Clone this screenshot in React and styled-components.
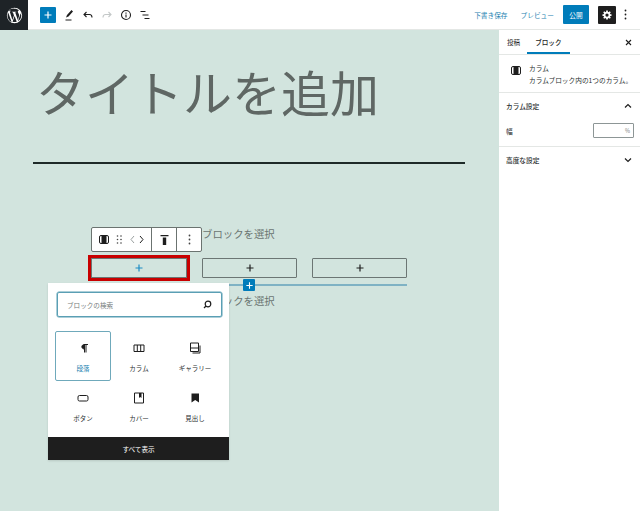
import React from 'react';
import styled, { createGlobalStyle } from 'styled-components';

const GlobalStyle = createGlobalStyle`
  html, body { margin: 0; padding: 0; background: #fff; }
  body {
    font-family: "Noto Sans CJK JP", "Noto Sans", sans-serif;
    color: #1e1e1e;
    overflow: hidden;
  }
`;

const Page = styled.div`
  width: 640px;
  height: 511px;
  display: flex;
  flex-direction: column;
  overflow: hidden;
`;

const TopBar = styled.header`
  height: 29px;
  flex: none;
  display: flex;
  align-items: center;
  background: #fff;
  border-bottom: 1px solid #e4e7e5;
`;

const Logo = styled.div`
  width: 28px;
  height: 30px;
  margin-bottom: -1px;
  background: #1e2327;
  display: flex;
  align-items: center;
  justify-content: center;
`;

const Tools = styled.div`
  display: flex;
  align-items: center;
  gap: 7px;
  margin-left: 12px;
`;

const AddButton = styled.div`
  width: 16px;
  height: 16px;
  background: #007cba;
  border-radius: 1px;
  display: flex;
  align-items: center;
  justify-content: center;
`;

const ToolIcon = styled.svg`
  width: 12px;
  height: 12px;
  display: block;
  color: ${p => (p.$muted ? '#c4c8c8' : '#1e1e1e')};
`;

const Actions = styled.div`
  margin-left: auto;
  display: flex;
  align-items: center;
`;

const LinkButton = styled.span`
  font-size: 6.7px;
  color: #1b7fb0;
  margin-right: ${p => p.$gap}px;
`;

const Publish = styled.div`
  width: 26px;
  height: 19px;
  background: #007cba;
  color: #fff;
  font-size: 6.7px;
  border-radius: 1px;
  display: flex;
  align-items: center;
  justify-content: center;
  margin-right: 9px;
`;

const SettingsButton = styled.div`
  width: 18px;
  height: 18px;
  background: #1e1e1e;
  border-radius: 1px;
  display: flex;
  align-items: center;
  justify-content: center;
  margin-right: 3px;
`;

const MoreDots = styled.div`
  width: 12px;
  display: flex;
  justify-content: center;
  margin-right: 9px;
`;

const Body = styled.div`
  flex: 1;
  display: flex;
  min-height: 0;
`;

const Canvas = styled.main`
  position: relative;
  width: 499px;
  flex: none;
  background: #d2e4de;
  padding: 0 34px 0 33px;
  box-sizing: border-box;
`;

const Title = styled.h1`
  margin: 0;
  padding: 27px 0 0 3px;
  height: 132px;
  box-sizing: border-box;
  font-size: 49px;
  line-height: 68px;
  font-weight: 400;
  color: #5f6764;
  white-space: nowrap;
`;

const Rule = styled.hr`
  margin: 0;
  border: 0;
  height: 2px;
  background: #1e2a28;
`;

const ColumnsArea = styled.section`
  margin: 29px 0 0 58px;
  width: 316px;
  padding-top: 28px;
`;

const Hint = styled.div`
  height: 37px;
  margin-left: 111px;
  font-size: 10.4px;
  line-height: 26px;
  color: #6b7572;
  white-space: nowrap;
`;

const Columns = styled.div`
  display: grid;
  grid-template-columns: 96px 95px 95px;
  column-gap: 15px;
`;

const AppenderButton = styled.div`
  height: 20px;
  box-sizing: border-box;
  border: 1px solid #6c7674;
  border-radius: ${p => (p.$selected ? 0 : 1)}px;
  display: flex;
  align-items: center;
  justify-content: center;
  outline: ${p => (p.$selected ? '3px solid #c80000' : 'none')};
`;

const Separator = styled.div`
  position: relative;
  height: 2px;
  margin-top: 6px;
  background: #7fb2c4;
`;

const SeparatorPlus = styled(AddButton)`
  position: absolute;
  left: 152px;
  top: -5px;
  width: 12px;
  height: 12px;
`;

const SecondHint = styled(Hint)`
  margin-top: 2px;
`;

const BlockToolbar = styled.div`
  position: absolute;
  left: 91px;
  top: 197px;
  height: 25px;
  width: 111px;
  box-sizing: border-box;
  display: flex;
  background: #fff;
  border: 1px solid #6b7370;
  border-radius: 2px;
`;

const ToolbarGroup = styled.div`
  display: flex;
  align-items: center;
  justify-content: center;
  gap: ${p => p.$gap || 0}px;
  width: ${p => p.$w}px;
  flex: none;
  box-sizing: border-box;
  & + & {
    border-left: 1px solid #6b7370;
  }
`;

const Inserter = styled.div`
  position: absolute;
  left: 48px;
  top: 253px;
  width: 181px;
  height: 177px;
  display: flex;
  flex-direction: column;
  background: #fff;
  box-shadow: 0 1px 2px rgba(0, 0, 0, 0.12);
`;

const SearchBox = styled.div`
  height: 25px;
  margin: 9px 7px 0 9px;
  box-sizing: border-box;
  border: 1px solid #5a9fb4;
  box-shadow: 0 0 0 0.5px #5a9fb4;
  border-radius: 2px;
  display: flex;
  align-items: center;
  justify-content: space-between;
  padding: 0 9px;
  font-size: 6.6px;
  color: #757b7b;
`;

const BlockGrid = styled.div`
  display: grid;
  grid-template-columns: repeat(3, 56px);
  grid-template-rows: 50px 49px;
  margin: 14px 0 0 7px;
  flex: 1;
`;

const BlockItem = styled.div`
  display: flex;
  flex-direction: column;
  align-items: center;
  padding-top: 9px;
  box-sizing: border-box;
  gap: 8px;
  font-size: 6.5px;
  color: ${p => (p.$active ? '#1b7fb0' : '#2a2f30')};
  border: 1px solid ${p => (p.$active ? '#6fa9bb' : 'transparent')};
  border-radius: 2px;
`;

const BlockIcon = styled.svg`
  width: 14px;
  height: 14px;
  display: block;
`;

const ShowAll = styled.div`
  height: 23px;
  background: #1e1e1e;
  color: #fff;
  font-size: 6.6px;
  display: flex;
  align-items: center;
  justify-content: center;
`;

const Sidebar = styled.aside`
  width: 141px;
  flex: none;
  background: #fff;
  display: flex;
  flex-direction: column;
`;

const TabBar = styled.div`
  height: 24px;
  display: flex;
  align-items: stretch;
  padding: 0 7px 0 8px;
  border-bottom: 1px solid #e4e7e5;
`;

const Tab = styled.div`
  font-size: 6.6px;
  font-weight: ${p => (p.$active ? 500 : 400)};
  display: flex;
  align-items: center;
  padding: 0 ${p => (p.$active ? 8 : 0)}px;
  margin-left: ${p => (p.$active ? 7 : 0)}px;
  box-shadow: ${p => (p.$active ? 'inset 0 -2px 0 #007cba' : 'none')};
`;

const CloseX = styled.div`
  margin-left: auto;
  margin-right: 1.5px;
  display: flex;
  align-items: center;
`;

const BlockCard = styled.div`
  display: flex;
  gap: 8px;
  box-sizing: border-box;
  padding: 8px 6px 0 12px;
  height: 38px;
  border-bottom: 1px solid #e4e7e5;
`;

const CardIcon = styled.div`
  display: flex;
  padding-top: 3px;
  height: 9px;
`;

const CardText = styled.div`
  font-size: 6.7px;
  line-height: 11.5px;
  white-space: nowrap;
  color: #2a2f30;
  p { margin: 0; }
`;

const Panel = styled.div`
  padding: 0 7px;
  & + & {
    border-top: 1px solid #e4e7e5;
  }
`;

const PanelHead = styled.div`
  height: 26px;
  display: flex;
  align-items: center;
  justify-content: space-between;
  font-size: 6.7px;
  font-weight: 500;
  color: #2a2f30;
`;

const WidthRow = styled.div`
  display: flex;
  align-items: center;
  justify-content: space-between;
  height: 19px;
  margin-right: -1px;
  padding: 2px 0 6px;
  font-size: 6.7px;
  color: #2a2f30;
`;

const WidthInput = styled.div`
  width: 41px;
  height: 15px;
  box-sizing: border-box;
  border: 1px solid #8d9696;
  border-radius: 1px;
  font-size: 5.5px;
  color: #7a8080;
  display: flex;
  align-items: center;
  justify-content: flex-end;
  padding-right: 3px;
`;

const Plus = ({ color = '#fff', size = 10 }) => (
  <svg width={size} height={size} viewBox="0 0 10 10" fill="none" stroke={color} strokeWidth="1.2">
    <path d="M5 1.5v7M1.5 5h7" />
  </svg>
);

const Dots = ({ color = '#1e1e1e' }) => (
  <svg width="3" height="11" viewBox="0 0 3 11" fill={color}>
    <circle cx="1.5" cy="1.5" r="0.9" />
    <circle cx="1.5" cy="5.5" r="0.9" />
    <circle cx="1.5" cy="9.5" r="0.9" />
  </svg>
);

const ColumnGlyph = () => (
  <svg width="10" height="9" viewBox="0 0 10 9">
    <rect x="0.5" y="0.5" width="9" height="8" rx="1.5" fill="none" stroke="#1e1e1e" />
    <rect x="2.500" y="0.5" width="5" height="8" fill="#1e1e1e" />
  </svg>
);

const Chevron = ({ up }) => (
  <svg width="10" height="10" viewBox="0 0 10 10" fill="none" stroke="#1e1e1e" strokeWidth="1.2">
    <path d={up ? 'M2 6.5 5 3.5l3 3' : 'M2 3.5 5 6.5l3-3'} />
  </svg>
);

const WpLogo = () => (
  <svg width="17" height="17" viewBox="0 0 20 20" fill="#fff">
    <path d="M10 1a9 9 0 1 0 0 18 9 9 0 0 0 0-18Zm0 1c2.1 0 4 .8 5.400 2.100h-.100c-.800 0-1.400.7-1.400 1.500 0 .7.400 1.200.800 1.900.300.600.700 1.300.700 2.400 0 .700-.300 1.600-.700 2.700l-.800 2.800-3.100-9.100c.500 0 1-.100 1-.100.500 0 .400-.700 0-.700 0 0-1.400.100-2.300.100-.800 0-2.200-.100-2.200-.100-.500 0-.500.700-.100.700 0 0 .400.100.900.100l1.300 3.600-1.900 5.500L4.400 5.200c.500 0 1-.100 1-.100.500 0 .400-.700 0-.700 0 0-1.300.100-2.100.100h-.300A8 8 0 0 1 10 2ZM2.700 6.900l3.900 10.800A8 8 0 0 1 2.700 6.900Zm7.400 3.700 2.400 6.600.100.100a8 8 0 0 1-4.900.100l2.400-6.800Zm6.300-4.200A8 8 0 0 1 18 10c0 2.900-1.600 5.500-4 6.900l2.400-7c.500-1.100.600-2 .600-2.800l-.100-.700Z" />
  </svg>
);

const Gear = () => (
  <svg width="12" height="12" viewBox="0 0 24 24" fill="none" stroke="#fff" strokeWidth="3.500">
    <circle cx="12" cy="12" r="5" />
    <path d="M12 3v4M12 17v4M3 12h4M17 12h4M5.500 5.500l3 3M15.500 15.500l3 3M5.500 18.500l3-3M15.500 8.500l3-3" />
  </svg>
);

const blocks = [
  {
    label: '段落',
    active: true,
    icon: <path d="M8 3.500h4M10 3.500v8M8.500 3.500v8M8.500 3.500C5 3.500 5 8 8.500 8" fill="#1e1e1e" stroke="#1e1e1e" strokeWidth="1" />,
  },
  {
    label: 'カラム',
    icon: <path d="M2 4h10v6.500H2zM5.300 4v6.500M8.700 4v6.500" fill="none" stroke="#1e1e1e" />,
  },
  {
    label: 'ギャラリー',
    icon: <path d="M2.500 2h8v8.500h-8zM2.500 7h8M12 4.500V12H4.500" fill="none" stroke="#1e1e1e" />,
  },
  {
    label: 'ボタン',
    icon: <rect x="2" y="4.500" width="10" height="5.500" rx="1.500" fill="none" stroke="#1e1e1e" />,
  },
  {
    label: 'カバー',
    icon: (
      <>
        <path d="M2.500 2h9v10h-9z" fill="none" stroke="#1e1e1e" />
        <path d="M7 2h2.500v5L8.200 6 7 7z" fill="#1e1e1e" />
      </>
    ),
  },
  {
    label: '見出し',
    icon: <path d="M3.500 2.500h7.500v9L7.200 9l-3.700 2.500z" fill="#1e1e1e" />,
  },
];

export default function App() {
  return (
    <>
      <GlobalStyle />
      <Page>
        <TopBar>
          <Logo><WpLogo /></Logo>
          <Tools>
            <AddButton><Plus /></AddButton>
            <ToolIcon viewBox="0 0 12 12" fill="currentColor">
              <path d="M8.500 1 10 2.500 5.500 7.500 3 8.500l1-2.500zM2.500 10.500h6v1h-6z" />
            </ToolIcon>
            <ToolIcon viewBox="0 0 12 12" fill="none" stroke="currentColor" strokeWidth="1.100">
              <path d="M4.500 3 2 5.500 4.500 8M2 5.500h5.500c1.500 0 2.500 1 2.500 3" />
            </ToolIcon>
            <ToolIcon $muted viewBox="0 0 12 12" fill="none" stroke="currentColor" strokeWidth="1.100">
              <path d="M7.500 3 10 5.500 7.500 8M10 5.500H4.500C3 5.500 2 6.500 2 8.500" />
            </ToolIcon>
            <ToolIcon viewBox="0 0 12 12" fill="none" stroke="currentColor" strokeWidth="1.100">
              <circle cx="6" cy="6" r="4.500" />
              <path d="M6 3.500v1.200M6 5.500v3" />
            </ToolIcon>
            <ToolIcon viewBox="0 0 12 12" fill="none" stroke="currentColor" strokeWidth="1.200">
              <path d="M1.500 2.500h5M3.500 6h6M5.500 9.500h5" />
            </ToolIcon>
          </Tools>
          <Actions>
            <LinkButton $gap={13}>下書き保存</LinkButton>
            <LinkButton $gap={9}>プレビュー</LinkButton>
            <Publish>公開</Publish>
            <SettingsButton><Gear /></SettingsButton>
            <MoreDots><Dots /></MoreDots>
          </Actions>
        </TopBar>
        <Body>
          <Canvas>
            <Title>タイトルを追加</Title>
            <Rule />
            <ColumnsArea>
              <Hint>ブロックを選択</Hint>
              <Columns>
                <AppenderButton $selected><Plus color="#1b8cc4" /></AppenderButton>
                <AppenderButton><Plus color="#1e1e1e" /></AppenderButton>
                <AppenderButton><Plus color="#1e1e1e" /></AppenderButton>
              </Columns>
              <Separator>
                <SeparatorPlus><Plus size={9} /></SeparatorPlus>
              </Separator>
              <SecondHint>ブロックを選択</SecondHint>
            </ColumnsArea>
            <BlockToolbar>
              <ToolbarGroup $w={59} $gap={7}>
                <ColumnGlyph />
                <svg width="7" height="9" viewBox="0 0 7 9" fill="#444">
                  <circle cx="1.500" cy="1" r="0.800" /><circle cx="5" cy="1" r="0.800" />
                  <circle cx="1.500" cy="4.500" r="0.800" /><circle cx="5" cy="4.500" r="0.800" />
                  <circle cx="1.500" cy="8" r="0.800" /><circle cx="5" cy="8" r="0.800" />
                </svg>
                <svg width="14" height="9" viewBox="0 0 14 9" fill="none" strokeWidth="1">
                  <path d="M4 1 1 4.500 4 8" stroke="#9aa0a0" />
                  <path d="M10 1l3 3.500L10 8" stroke="#1e1e1e" />
                </svg>
              </ToolbarGroup>
              <ToolbarGroup $w={25}>
                <svg width="9" height="10" viewBox="0 0 9 10" fill="#1e1e1e">
                  <path d="M0.500 0h8v1.200h-8zM2.800 2.500h3.400V10H2.800z" />
                </svg>
              </ToolbarGroup>
              <ToolbarGroup $w={25}><Dots color="#444" /></ToolbarGroup>
            </BlockToolbar>
            <Inserter>
              <SearchBox>
                <span>ブロックの検索</span>
                <svg width="9" height="9" viewBox="0 0 9 9" fill="none" stroke="#1e1e1e" strokeWidth="1.200">
                  <circle cx="5" cy="4" r="2.800" />
                  <path d="M3 6 1 8" />
                </svg>
              </SearchBox>
              <BlockGrid>
                {blocks.map(b => (
                  <BlockItem key={b.label} $active={b.active}>
                    <BlockIcon viewBox="0 0 14 14">{b.icon}</BlockIcon>
                    {b.label}
                  </BlockItem>
                ))}
              </BlockGrid>
              <ShowAll>すべて表示</ShowAll>
            </Inserter>
          </Canvas>
          <Sidebar>
            <TabBar>
              <Tab>投稿</Tab>
              <Tab $active>ブロック</Tab>
              <CloseX>
                <svg width="7" height="7" viewBox="0 0 7 7" stroke="#1e1e1e" strokeWidth="1.100">
                  <path d="M1 1l5 5M6 1 1 6" />
                </svg>
              </CloseX>
            </TabBar>
            <BlockCard>
              <CardIcon><ColumnGlyph /></CardIcon>
              <CardText>
                <p>カラム</p>
                <p>カラムブロック内の1つのカラム。</p>
              </CardText>
            </BlockCard>
            <Panel>
              <PanelHead>カラム設定<Chevron up /></PanelHead>
              <WidthRow>
                幅
                <WidthInput>%</WidthInput>
              </WidthRow>
            </Panel>
            <Panel>
              <PanelHead>高度な設定<Chevron /></PanelHead>
            </Panel>
          </Sidebar>
        </Body>
      </Page>
    </>
  );
}
